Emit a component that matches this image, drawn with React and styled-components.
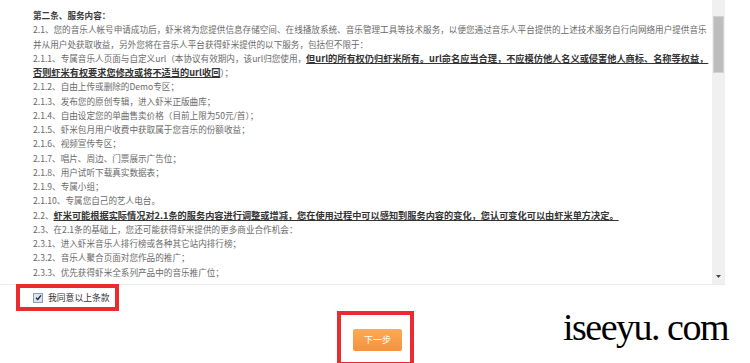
import React from 'react';
import styled, {createGlobalStyle} from 'styled-components';

const GlobalStyle = createGlobalStyle`
  html, body {
    margin: 0;
    padding: 0;
    background: #fff;
  }
  body {
    font-family: "Noto Sans CJK SC", "Noto Sans", sans-serif;
  }
`;

const Page = styled.div`
  position: relative;
  width: 750px;
  height: 363px;
  overflow: hidden;
  display: flex;
  flex-direction: column;
`;

const TermsBox = styled.div`
  width: 725px;
  height: 284px;
  flex-shrink: 0;
  border-bottom: 1px solid #ececec;
  display: flex;
`;

const Terms = styled.div`
  flex: 0 0 712px;
  overflow: hidden;
  box-sizing: border-box;
  padding: 8px 0 0 33px;
  font-size: 8.6px;
  color: #6a6a6a;
`;

const Line = styled.div`
  height: 14.25px;
  line-height: 14.25px;
  white-space: nowrap;
  font-weight: ${p => (p.$title ? 700 : 400)};
  color: ${p => (p.$title ? '#3c3c3c' : 'inherit')};
`;

const Strong = styled.span`
  font-size: 9.2px;
  font-weight: 700;
  color: #333;
  text-decoration: underline;
`;

const ScrollBar = styled.div`
  width: 13px;
  display: flex;
  flex-direction: column;
  background: #f0f0f0;
`;

const ScrollButton = styled.div`
  height: 16px;
  display: flex;
  align-items: center;
  justify-content: center;
`;

const ScrollTrack = styled.div`
  flex: 1;
`;

const ScrollThumb = styled.div`
  height: 57px;
  margin: 0 1px;
  background: #bdbdbd;
  border: 1px solid #d2d2d2;
  box-sizing: border-box;
`;

const Footer = styled.div`
  flex: 1;
  display: flex;
  flex-direction: column;
  border-bottom: 3px solid #e2e2e2;
`;

const AgreeBox = styled.label`
  align-self: flex-start;
  margin: -1px 0 0 16px;
  height: 19px;
  padding: 0 5px 0 13px;
  border: 4px solid #ea2b2f;
  display: flex;
  align-items: center;
  gap: 5px;
  font-size: 8.8px;
  color: #333;
`;

const CheckMark = styled.span`
  width: 8px;
  height: 8px;
  border: 1px solid #8d9db6;
  background: #dbe3ef;
  display: flex;
  align-items: center;
  justify-content: center;
`;

const NextBox = styled.div`
  align-self: center;
  margin-left: 1px;
  padding: 9px 8px 11px 12px;
  border: 4px solid #ea2b2f;
`;

const NextButton = styled.button`
  width: 49px;
  height: 22px;
  border: 0;
  border-radius: 2px;
  padding: 0;
  background: linear-gradient(#fbaa58, #f6923b);
  color: #fff;
  font-family: "Noto Sans CJK SC", sans-serif;
  font-size: 9px;
  cursor: pointer;
`;

const Watermark = styled.div`
  position: absolute;
  left: 552px;
  top: 308px;
  right: 0;
  bottom: 0;
  padding-left: 11px;
  background: #fff;
  font-family: "Liberation Serif", "DejaVu Serif", serif;
  font-size: 38px;
  line-height: 38px;
  letter-spacing: -1.5px;
  color: #000;
`;

const lines = [
  {title: true, text: '第二条、服务内容：'},
  {text: '2.1、您的音乐人帐号申请成功后，虾米将为您提供信息存储空间、在线播放系统、音乐管理工具等技术服务，以便您通过音乐人平台提供的上述技术服务自行向网络用户提供音乐'},
  {text: '并从用户处获取收益，另外您将在音乐人平台获得虾米提供的以下服务，包括但不限于：'},
  {text: '2.1.1、专属音乐人页面与自定义url（本协议有效期内，该url归您使用，', strong: '但url的所有权仍归虾米所有。url命名应当合理，不应模仿他人名义或侵害他人商标、名称等权益，'},
  {strong: '否则虾米有权要求您修改或将不适当的url收回', after: '）；'},
  {text: '2.1.2、自由上传或删除的Demo专区；'},
  {text: '2.1.3、发布您的原创专辑，进入虾米正版曲库；'},
  {text: '2.1.4、自由设定您的单曲售卖价格（目前上限为50元/首）；'},
  {text: '2.1.5、虾米包月用户收费中获取属于您音乐的份额收益；'},
  {text: '2.1.6、视频宣传专区；'},
  {text: '2.1.7、唱片、周边、门票展示广告位；'},
  {text: '2.1.8、用户试听下载真实数据表；'},
  {text: '2.1.9、专属小组；'},
  {text: '2.1.10、专属您自己的艺人电台。'},
  {text: '2.2、', strong: '虾米可能根据实际情况对2.1条的服务内容进行调整或增减，您在使用过程中可以感知到服务内容的变化，您认可变化可以由虾米单方决定。'},
  {text: '2.3、在2.1条的基础上，您还可能获得虾米提供的更多商业合作机会：'},
  {text: '2.3.1、进入虾米音乐人排行榜或各种其它站内排行榜；'},
  {text: '2.3.2、音乐人聚合页面对您作品的推广；'},
  {text: '2.3.3、优先获得虾米全系列产品中的音乐推广位；'},
];

export default function App() {
  return (
    <Page>
      <GlobalStyle />
      <TermsBox>
        <Terms>
          {lines.map((l, i) => (
            <Line key={i} $title={l.title}>
              {l.text}
              {l.strong && <Strong>{l.strong}</Strong>}
              {l.after}
            </Line>
          ))}
        </Terms>
        <ScrollBar>
          <ScrollButton />
          <ScrollTrack>
            <ScrollThumb />
          </ScrollTrack>
          <ScrollButton>
            <svg width="5" height="3" viewBox="0 0 5 3">
              <path d="M0 0 H5 L2.5 3 Z" fill="#444" />
            </svg>
          </ScrollButton>
        </ScrollBar>
      </TermsBox>
      <Footer>
        <AgreeBox>
          <CheckMark>
            <svg width="7" height="7" viewBox="0 0 8 8">
              <path d="M1.2 4.2 L3.2 6.3 L6.8 1.6" fill="none" stroke="#1e2a3a" strokeWidth="1.6" />
            </svg>
          </CheckMark>
          我同意以上条款
        </AgreeBox>
        <NextBox>
          <NextButton>下一步</NextButton>
        </NextBox>
      </Footer>
      <Watermark>iseeyu. com</Watermark>
    </Page>
  );
}
